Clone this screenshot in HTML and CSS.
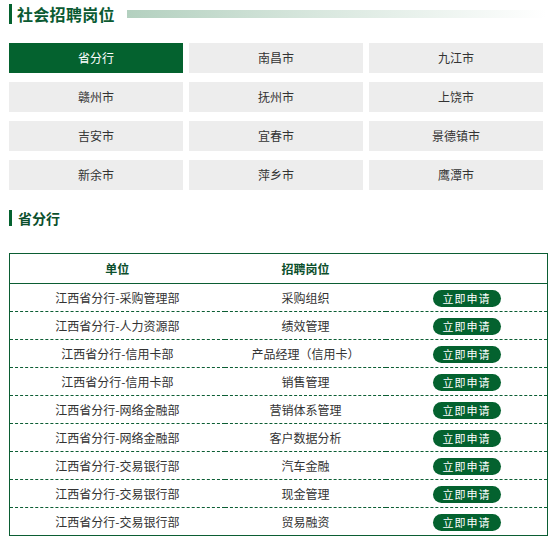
FILE: index.html
```html
<!DOCTYPE html>
<html lang="zh">
<head>
<meta charset="utf-8">
<link rel="stylesheet" href="styles.css">
</head>
<body>
<div class="page">
  <div class="title-row">
    <span class="title-bar"></span>
    <h1 class="title">社会招聘岗位</h1>
    <span class="title-line"></span>
  </div>

  <div class="tabs">
    <div class="tab active">省分行</div>
    <div class="tab">南昌市</div>
    <div class="tab">九江市</div>
    <div class="tab">赣州市</div>
    <div class="tab">抚州市</div>
    <div class="tab">上饶市</div>
    <div class="tab">吉安市</div>
    <div class="tab">宜春市</div>
    <div class="tab">景德镇市</div>
    <div class="tab">新余市</div>
    <div class="tab">萍乡市</div>
    <div class="tab">鹰潭市</div>
  </div>

  <div class="section-title">
    <span class="section-bar"></span>
    <h2 class="section-name">省分行</h2>
  </div>

  <table class="jobs">
    <colgroup>
      <col class="c1"><col class="c2"><col class="c3">
    </colgroup>
    <thead>
      <tr><th>单位</th><th>招聘岗位</th><th></th></tr>
    </thead>
    <tbody>
      <tr><td>江西省分行-采购管理部</td><td>采购组织</td><td><span class="apply">立即申请</span></td></tr>
      <tr><td>江西省分行-人力资源部</td><td>绩效管理</td><td><span class="apply">立即申请</span></td></tr>
      <tr><td>江西省分行-信用卡部</td><td>产品经理（信用卡）</td><td><span class="apply">立即申请</span></td></tr>
      <tr><td>江西省分行-信用卡部</td><td>销售管理</td><td><span class="apply">立即申请</span></td></tr>
      <tr><td>江西省分行-网络金融部</td><td>营销体系管理</td><td><span class="apply">立即申请</span></td></tr>
      <tr><td>江西省分行-网络金融部</td><td>客户数据分析</td><td><span class="apply">立即申请</span></td></tr>
      <tr><td>江西省分行-交易银行部</td><td>汽车金融</td><td><span class="apply">立即申请</span></td></tr>
      <tr><td>江西省分行-交易银行部</td><td>现金管理</td><td><span class="apply">立即申请</span></td></tr>
      <tr><td>江西省分行-交易银行部</td><td>贸易融资</td><td><span class="apply">立即申请</span></td></tr>
    </tbody>
  </table>
</div>
</body>
</html>
```

FILE: styles.css
```css
* { box-sizing: border-box; }
html, body { margin: 0; padding: 0; background: #fff; }
body {
  font-family: "Noto Sans CJK SC", "Noto Sans", "Liberation Sans", sans-serif;
  color: #333;
}
.page {
  width: 553px;
  padding: 4px 5px 0 9px;
}
.title-row {
  display: flex;
  align-items: center;
  height: 20px;
}
.title-bar {
  width: 3px;
  height: 20px;
  background: #04622f;
  flex: none;
}
.title {
  margin: 0 0 0 5px;
  font-size: 16px;
  line-height: 20px;
  font-weight: bold;
  color: #0b5a32;
  letter-spacing: 0.3px;
}
.title-line {
  margin-left: 12px;
  width: 419px;
  height: 8px;
  background: linear-gradient(to right, #b3d0bf 0%, #d8e7de 45%, #ffffff 100%);
}
.tabs {
  margin-top: 19px;
  width: 534px;
  display: grid;
  grid-template-columns: repeat(3, 174px);
  column-gap: 6px;
  row-gap: 9px;
}
.tab {
  height: 30px;
  line-height: 30px;
  text-align: center;
  background: #ededed;
  font-size: 12px;
  color: #333;
}
.tab.active {
  background: #04622f;
  color: #fff;
}
.section-title {
  margin-top: 20px;
  display: flex;
  align-items: center;
  height: 16px;
}
.section-bar {
  width: 3px;
  height: 16px;
  background: #04622f;
}
.section-name {
  margin: 0 0 0 6px;
  font-size: 14px;
  line-height: 16px;
  font-weight: bold;
  color: #0b4f2c;
}
.jobs {
  margin-top: 27px;
  width: 539px;
  border-collapse: collapse;
  border: 1px solid #0b5d33;
  table-layout: fixed;
  font-size: 12px;
}
.c1 { width: 40%; }
.c2 { width: 30%; }
.c3 { width: 30%; }
.jobs th {
  height: 30px;
  font-weight: bold;
  color: #0b4f2c;
  font-size: 12px;
  text-align: center;
  border-bottom: 1px solid #0b5d33;
  padding: 0;
}
.jobs td {
  height: 28px;
  padding: 0;
  text-align: center;
  color: #333;
  border-bottom: 1px dashed #0b5d33;
}
.jobs tbody tr:last-child td { border-bottom: none; }
.apply {
  display: inline-block;
  width: 68px;
  height: 17px;
  line-height: 17px;
  border-radius: 9px;
  background: #04622f;
  color: #fff;
  font-size: 11px;
  letter-spacing: 1px;
  vertical-align: middle;
}
```
